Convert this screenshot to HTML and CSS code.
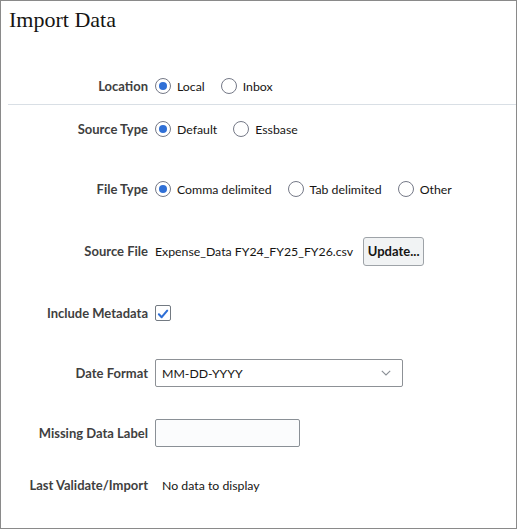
FILE: index.html
```html
<!DOCTYPE html>
<html lang="en">
<head>
<meta charset="utf-8">
<title>Import Data</title>
<link rel="stylesheet" href="styles.css">
</head>
<body>
<div class="frame">
  <h1 class="title">Import Data</h1>

  <div class="row row-location">
    <div class="label">Location</div>
    <div class="control options">
      <label class="opt"><span class="radio checked"></span><span>Local</span></label>
      <label class="opt"><span class="radio"></span><span>Inbox</span></label>
    </div>
  </div>

  <div class="divider"></div>

  <div class="rows">
    <div class="row">
      <div class="label">Source Type</div>
      <div class="control options">
        <label class="opt"><span class="radio checked"></span><span>Default</span></label>
        <label class="opt"><span class="radio"></span><span>Essbase</span></label>
      </div>
    </div>

    <div class="row">
      <div class="label">File Type</div>
      <div class="control options">
        <label class="opt"><span class="radio checked"></span><span>Comma delimited</span></label>
        <label class="opt"><span class="radio"></span><span>Tab delimited</span></label>
        <label class="opt"><span class="radio"></span><span>Other</span></label>
      </div>
    </div>

    <div class="row row-shift">
      <div class="label">Source File</div>
      <div class="control file">
        <span class="value">Expense_Data FY24_FY25_FY26.csv</span>
        <button class="btn" type="button">Update...</button>
      </div>
    </div>

    <div class="row row-shift">
      <div class="label">Include Metadata</div>
      <div class="control">
        <span class="checkbox">
          <svg viewBox="0 0 16 16" width="16" height="16"><path d="M3.3 8.3 L6.5 11.6 L12.8 4.2" fill="none" stroke="#2f6fd6" stroke-width="2.4" stroke-linecap="round" stroke-linejoin="round"/></svg>
        </span>
      </div>
    </div>

    <div class="row">
      <div class="label">Date Format</div>
      <div class="control">
        <div class="select">
          <span>MM-DD-YYYY</span>
          <svg class="chev" viewBox="0 0 10 6" width="10" height="6"><path d="M0.8 0.8 L5 5 L9.2 0.8" fill="none" stroke="#8a8f96" stroke-width="1.1"/></svg>
        </div>
      </div>
    </div>

    <div class="row">
      <div class="label">Missing Data Label</div>
      <div class="control">
        <div class="input"></div>
      </div>
    </div>

    <div class="row row-last">
      <div class="label">Last Validate/Import</div>
      <div class="control">
        <span class="value indent">No data to display</span>
      </div>
    </div>
  </div>
</div>
</body>
</html>
```

FILE: styles.css
```css
html, body {
  margin: 0;
  padding: 0;
  background: #ffffff;
}

.frame {
  box-sizing: border-box;
  width: 517px;
  height: 529px;
  border: 1px solid #8a8a8a;
  font-family: Lato, "Liberation Sans", sans-serif;
  font-size: 13px;
  color: #161513;
}

.title {
  margin: 6px 0 0 8px;
  font-family: "Liberation Serif", "DejaVu Serif", serif;
  font-weight: normal;
  font-size: 22px;
  line-height: 26px;
  color: #161513;
}

.row {
  display: grid;
  grid-template-columns: 147px 1fr;
  column-gap: 7px;
  align-items: center;
  height: 30px;
}

.row-location {
  margin-top: 38px;
}

.label {
  text-align: right;
  font-weight: bold;
  color: #3f3f3f;
}

.control {
  display: flex;
  align-items: center;
  font-size: 12.3px;
}

.options {
  gap: 16px;
}

.opt {
  display: flex;
  align-items: center;
  gap: 6px;
}

.radio {
  box-sizing: border-box;
  width: 16px;
  height: 16px;
  border: 1px solid #757987;
  border-radius: 50%;
  background: #ffffff;
  display: flex;
  align-items: center;
  justify-content: center;
}

.radio.checked::after {
  content: "";
  width: 8px;
  height: 8px;
  border-radius: 50%;
  background: #2f6fd6;
}

.divider {
  height: 1px;
  background: #d9dfe5;
  margin: 3px 0 0 7px;
}

.rows {
  display: flex;
  flex-direction: column;
  gap: 30px;
  margin-top: 9px;
}

.row-shift {
  margin-top: 2px;
}

.row-last {
  margin-top: -8px;
}

.file {
  gap: 10px;
}

.btn {
  box-sizing: border-box;
  width: 61px;
  height: 29px;
  padding: 0;
  border: 1px solid #9ea3a8;
  border-radius: 3px;
  background: #f1f3f4;
  font-family: Lato, "Liberation Sans", sans-serif;
  font-size: 13px;
  font-weight: bold;
  color: #161513;
}

.checkbox {
  box-sizing: border-box;
  width: 16px;
  height: 16px;
  border: 1px solid #737a82;
  border-radius: 2px;
  display: flex;
}

.select {
  box-sizing: border-box;
  width: 248px;
  height: 28px;
  border: 1px solid #8d9196;
  border-radius: 2px;
  display: flex;
  align-items: center;
  justify-content: space-between;
  padding: 0 11px 0 6px;
  background: #ffffff;
}

.input {
  box-sizing: border-box;
  width: 145px;
  height: 28px;
  border: 1px solid #8a9096;
  border-radius: 2px;
  background: #fbfcfd;
}

.indent {
  padding-left: 7px;
}
```
